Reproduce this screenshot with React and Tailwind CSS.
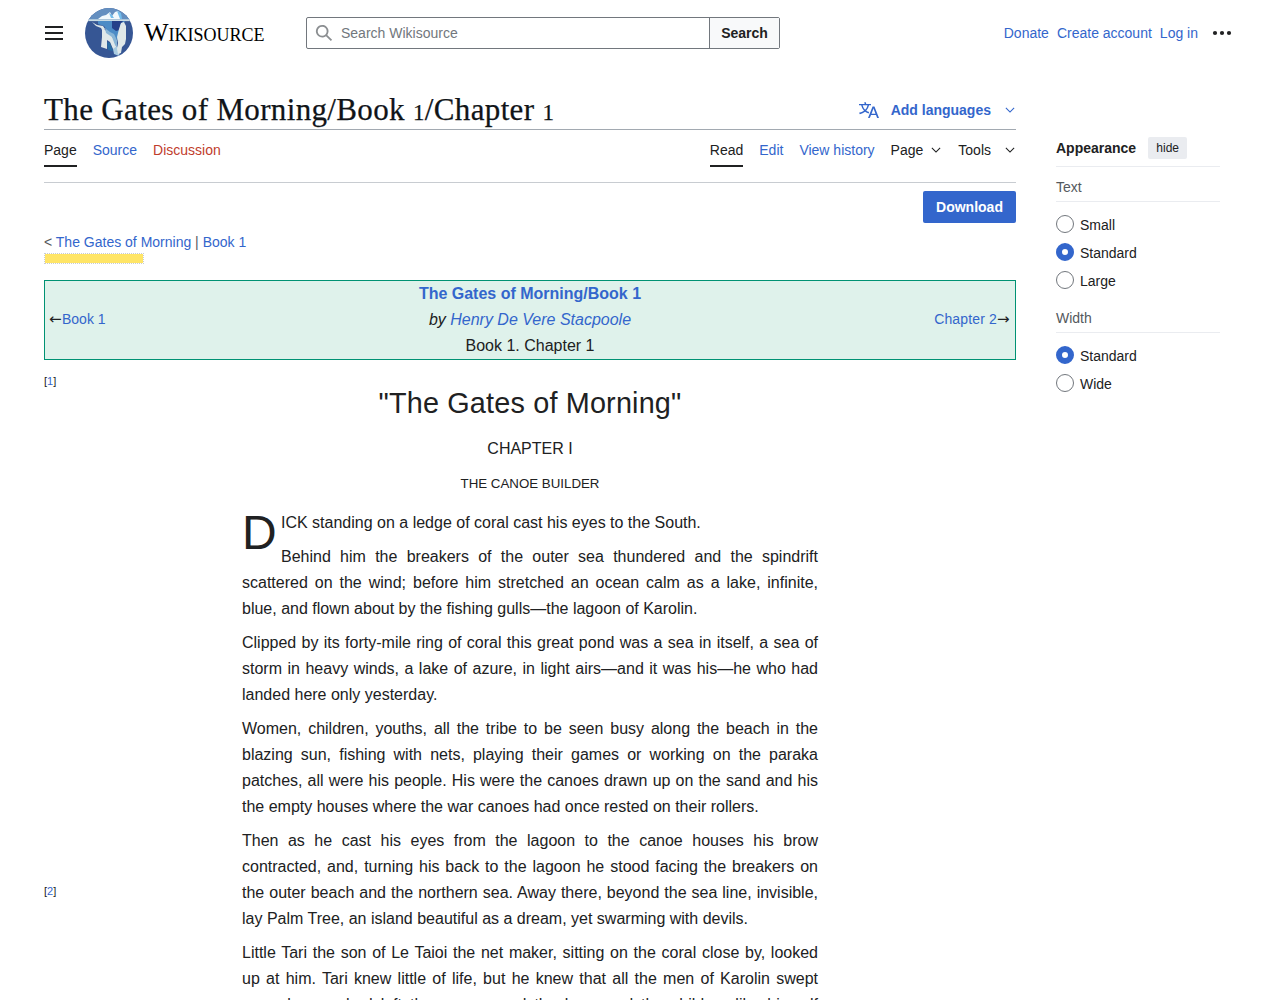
import React from "react";

const Chevron = ({ className }) => (
  <svg viewBox="0 0 20 20" className={className} fill="currentColor">
    <path d="m17.5 4.75-7.5 7.5-7.5-7.5L1 6.25l9 9 9-9z" />
  </svg>
);

const Link = ({ children, className = "" }) => (
  <a className={"text-[#3366cc] " + className}>{children}</a>
);

const Logo = () => (
  <svg viewBox="0 0 48 50" className="h-[50px] w-12">
    <defs>
      <clipPath id="disc"><ellipse cx="24" cy="25" rx="24" ry="25" /></clipPath>
    </defs>
    <g clipPath="url(#disc)">
      <rect width="48" height="50" fill="#365694" />
      <rect width="48" height="12" fill="#648fc0" />
      <path d="M13 11l4-3 4-1 4-3 2 4 3-4 3-1 3 4v4z" fill="#f1f8fc" />
      <path d="M24 5l2 5h3l-2-3zM32 3l3 8h2l-1-6z" fill="#72bdec" />
      <rect y="11.3" width="48" height="1.8" fill="#c9dce4" />
      <path d="M13 13.100h27l-3 5-3 6-1 8-8-6-6-8-6-2z" fill="#4c8cc6" />
      <path d="M27 13.100h11l-3 4v5l-4 1-4-3z" fill="#24418a" />
      <path d="M7 14l5 3 6 1 2 3-2 3-2-4-5-2z" fill="#dfe8e9" />
      <path d="M17 20l3 2 5 3 4 7 2 6v4l-3-1-3-7-3-2v9l-6-2 1-10z" fill="#dfe8e9" />
      <path d="M20 20l5 4 4 2 3 6v7l-2-2-3-8-6-4z" fill="#88b5d6" />
      <path d="M22 34l3 1 3 8-5-1z" fill="#286da4" />
      <path d="M28 41l4-3 3 5-1 5-5-2z" fill="#a9cbe0" />
      <path d="M36 15l3-1 2 4v13l-1 5-3 3-1 6-3 1-1-5 1-6-1-6 2-8z" fill="#dfe8e9" />
    </g>
  </svg>
);

const Radio = ({ label, checked }) => (
  <div className="flex h-7 items-center">
    <span
      className={
        checked
          ? "h-[18px] w-[18px] rounded-full border-[6px] border-[#3366cc] bg-white"
          : "h-[18px] w-[18px] rounded-full border border-[#72777d] bg-white"
      }
    />
    <span className="relative top-px ml-1.5">{label}</span>
  </div>
);

const paragraphs = [
  "Clipped by its forty-mile ring of coral this great pond was a sea in itself, a sea of storm in heavy winds, a lake of azure, in light airs—and it was his—he who had landed here only yesterday.",
  "Women, children, youths, all the tribe to be seen busy along the beach in the blazing sun, fishing with nets, playing their games or working on the paraka patches, all were his people. His were the canoes drawn up on the sand and his the empty houses where the war canoes had once rested on their rollers.",
  "Then as he cast his eyes from the lagoon to the canoe houses his brow contracted, and, turning his back to the lagoon he stood facing the breakers on the outer beach and the northern sea. Away there, beyond the sea line, invisible, lay Palm Tree, an island beautiful as a dream, yet swarming with devils.",
  "Little Tari the son of Le Taioi the net maker, sitting on the coral close by, looked up at him. Tari knew little of life, but he knew that all the men of Karolin swept away by war had left the women and the boys and the children like himself",
];

export default function App() {
  return (
    <div className="h-[1000px] w-[1280px] overflow-hidden bg-white font-['Liberation_Sans',Arial,sans-serif] text-[14px] text-[#202122]">
      <header className="flex h-[66px] items-center pr-12 pl-11">
        <div className="flex h-[14px] w-5 flex-col justify-between px-px">
          <i className="h-0.5 bg-[#202122]" />
          <i className="h-0.5 bg-[#202122]" />
          <i className="h-0.5 bg-[#202122]" />
        </div>
        <div className="ml-[21px]"><Logo /></div>
        <div className="ml-[11px] w-[162px] pt-0.5 font-['Liberation_Serif',serif] text-[18px] leading-6 whitespace-nowrap text-black">
          <span className="text-[26px]">W</span>IKISOURCE
        </div>
        <div className="flex h-8 w-[474px] rounded-[2px] border border-[#72777d]">
          <div className="flex flex-1 items-center text-[#72777d]">
            <svg viewBox="0 0 20 20" className="mr-2 ml-2 h-[18px] w-[18px]" fill="#8b8e91">
              <path d="M12.2 13.6a7 7 0 1 1 1.4-1.4l5.4 5.4-1.4 1.4zM3 8a5 5 0 1 0 10 0A5 5 0 0 0 3 8" />
            </svg>
            Search Wikisource
          </div>
          <div className="flex w-[70px] items-center justify-center border-l border-[#72777d] bg-[#f8f9fa] font-bold">Search</div>
        </div>
        <nav className="ml-auto flex items-center gap-2">
          <Link>Donate</Link>
          <Link>Create account</Link>
          <Link>Log in</Link>
          <svg viewBox="0 0 20 20" className="ml-1.5 h-5 w-5" fill="#202122">
            <circle cx="3" cy="10" r="2.1" /><circle cx="10" cy="10" r="2.1" /><circle cx="17" cy="10" r="2.1" />
          </svg>
        </nav>
      </header>

      <div className="flex gap-10 pl-11">
        <main className="w-[972px]">
          <div className="mt-6 flex h-10 items-center justify-between border-b border-[#a2a9b1]">
            <h1 className="pt-[3px] font-['Liberation_Serif',serif] text-[31px] leading-9 tracking-[0.35px] whitespace-nowrap text-[#101418] [-webkit-text-stroke:0.25px_#101418]">
              The Gates of Morning/Book <span className="text-[23px]">1</span>/Chapter <span className="text-[23px]">1</span>
            </h1>
            <div className="flex items-center pt-px font-bold text-[#3366cc]">
              <svg viewBox="0 0 20 20" className="mr-3 h-5 w-5" fill="currentColor">
                <path d="M20 18h-1.44a.6.6 0 0 1-.4-.12.8.8 0 0 1-.23-.31L17 15h-5l-1 2.54a.8.8 0 0 1-.22.3.6.6 0 0 1-.4.14H9l4.55-11.47h1.89zm-3.53-4.31L14.89 9.5a12 12 0 0 1-.39-1.24q-.09.37-.19.69l-.19.56-1.58 4.19zm-6.3-1.58a13.4 13.4 0 0 1-2.91-1.41 11.46 11.46 0 0 0 2.81-5.37H12V4H7.31a4 4 0 0 0-.2-.56C6.87 2.79 6.6 2 6.6 2l-1.47.5s.4.89.6 1.5H0v1.33h2.15A11.23 11.23 0 0 0 5 10.7a17.2 17.2 0 0 1-5 2.1q.56.82.87 1.38a23.3 23.3 0 0 0 5.22-2.51 15.6 15.6 0 0 0 3.56 1.77zM3.63 5.33h4.91a8.1 8.1 0 0 1-2.45 4.45 9.1 9.1 0 0 1-2.46-4.45" />
              </svg>
              Add languages
              <Chevron className="mr-px ml-[14px] h-2.5 w-2.5" />
            </div>
          </div>
          <div className="flex h-[53px] justify-between border-b border-[#c8ccd1] leading-5">
            <div className="flex items-start gap-4 pt-2.5">
              <span className="h-[27px] border-b-2 border-[#202122]">Page</span>
              <Link>Source</Link>
              <a className="text-[#bf3c2c]">Discussion</a>
            </div>
            <div className="flex items-start pt-2.5">
              <span className="mr-4 h-[27px] border-b-2 border-[#202122]">Read</span>
              <Link className="mr-4">Edit</Link>
              <Link className="mr-4">View history</Link>
              <span>Page</span>
              <Chevron className="mt-[5px] mr-[17px] ml-2 h-2.5 w-2.5" />
              <span>Tools</span>
              <Chevron className="mt-[5px] mr-px ml-[14px] h-2.5 w-2.5" />
            </div>
          </div>
          <div className="mt-2 flex justify-end">
            <button className="h-8 w-[93px] rounded-[2px] bg-[#3366cc] font-bold text-white">Download</button>
          </div>
          <div className="mt-[9px] mb-px h-5 leading-5 text-[#54595d]">
            &lt; <Link>The Gates of Morning</Link> | <Link>Book 1</Link>
          </div>
          <div className="h-[11px] w-[100px] border border-dotted border-[#c8ccd1] bg-[#ffe566] bg-clip-padding" />

          <div className="mt-4 flex h-20 items-center justify-between border border-[#009273] bg-[#dff2eb] px-1">
            <div className="flex w-[120px] items-center pb-0.5 leading-5">
              <span className="w-[13px] font-['DejaVu_Sans',sans-serif] text-[15px]">←</span>
              <Link>Book 1</Link>
            </div>
            <div className="text-center text-[16px] leading-[26px]">
              <div><Link className="font-bold">The Gates of Morning/Book 1</Link></div>
              <div className="italic">by <Link>Henry De Vere Stacpoole</Link></div>
              <div>Book 1. Chapter 1</div>
            </div>
            <div className="flex w-[120px] items-center justify-end pb-0.5 leading-5">
              <Link className="tracking-[0.15px]">Chapter 2</Link>
              <span className="w-[14px] font-['DejaVu_Sans',sans-serif] text-[15px]">→</span>
            </div>
          </div>

          <div className="relative mt-4 text-[16px] leading-[26px]">
            <span className="absolute -top-[3px] left-0 text-[11px] leading-[16px]">[<Link>1</Link>]</span>
            <span className="absolute top-[507px] left-0 text-[11px] leading-[16px]">[<Link>2</Link>]</span>
            <div className="mx-auto w-[576px] text-justify">
              <div className="pt-1 text-center text-[28.8px] leading-[46px] tracking-[0.18px]">"The Gates of Morning"</div>
              <div className="mt-[10px] text-center">CHAPTER I</div>
              <div className="mt-[11px] text-center text-[13.3px] leading-[22px]">THE CANOE BUILDER</div>
              <span className="float-left mt-[15px] mr-[5px] h-[37px] w-[34px] text-[48px] leading-[46px]">D</span>
              <p className="mt-[15px]">ICK standing on a ledge of coral cast his eyes to the South.</p>
              <p className="mt-2">Behind him the breakers of the outer sea thundered and the spindrift scattered on the wind; before him stretched an ocean calm as a lake, infinite, blue, and flown about by the fishing gulls—the lagoon of Karolin.</p>
              {paragraphs.map((text, i) => (
                <p key={i} className={i === paragraphs.length - 1 ? "mt-2 [text-align-last:justify]" : "mt-2"}>{text}</p>
              ))}
            </div>
          </div>
        </main>

        <aside className="mt-[71px] w-[164px]">
          <div className="flex h-[30px] items-start border-b border-[#eaecf0]">
            <b className="leading-[22px]">Appearance</b>
            <span className="ml-3 h-[22px] w-[39px] rounded-[2px] bg-[#eaecf0] text-center text-[12px] leading-[22px]">hide</span>
          </div>
          <div className="h-[35px] border-b border-[#eaecf0] pt-[9px] leading-[22px] text-[#54595d]">Text</div>
          <div className="mt-2">
            <Radio label="Small" />
            <Radio label="Standard" checked />
            <Radio label="Large" />
          </div>
          <div className="mt-[3px] h-[36px] border-b border-[#eaecf0] pt-[10px] leading-[22px] text-[#54595d]">Width</div>
          <div className="mt-2">
            <Radio label="Standard" checked />
            <Radio label="Wide" />
          </div>
        </aside>
      </div>
    </div>
  );
}
